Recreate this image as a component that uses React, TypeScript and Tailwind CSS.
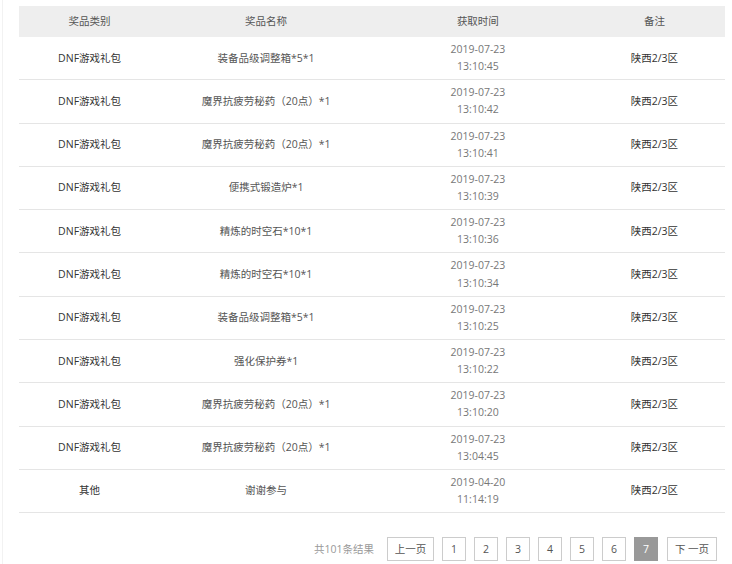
const rows = [
  { type: "DNF游戏礼包", name: "装备品级调整箱*5*1", date: "2019-07-23", time: "13:10:45" },
  { type: "DNF游戏礼包", name: "魔界抗疲劳秘药（20点）*1", date: "2019-07-23", time: "13:10:42" },
  { type: "DNF游戏礼包", name: "魔界抗疲劳秘药（20点）*1", date: "2019-07-23", time: "13:10:41" },
  { type: "DNF游戏礼包", name: "便携式锻造炉*1", date: "2019-07-23", time: "13:10:39" },
  { type: "DNF游戏礼包", name: "精炼的时空石*10*1", date: "2019-07-23", time: "13:10:36" },
  { type: "DNF游戏礼包", name: "精炼的时空石*10*1", date: "2019-07-23", time: "13:10:34" },
  { type: "DNF游戏礼包", name: "装备品级调整箱*5*1", date: "2019-07-23", time: "13:10:25" },
  { type: "DNF游戏礼包", name: "强化保护券*1", date: "2019-07-23", time: "13:10:22" },
  { type: "DNF游戏礼包", name: "魔界抗疲劳秘药（20点）*1", date: "2019-07-23", time: "13:10:20" },
  { type: "DNF游戏礼包", name: "魔界抗疲劳秘药（20点）*1", date: "2019-07-23", time: "13:04:45" },
  { type: "其他", name: "谢谢参与", date: "2019-04-20", time: "11:14:19" },
];

const font = "font-['Open_Sans','Noto_Sans_CJK_SC',sans-serif]";

export default function App() {
  return (
    <div className={`min-h-[564px] bg-white ${font} text-[10.5px] leading-[17.14px]`}>
      <div className="ml-[2px] border-l border-[#f2f2f2] pl-[16px] pr-[7px] pt-[6px] pb-[3px]">
        <table className="w-full table-fixed border-collapse text-center">
          <colgroup>
            <col className="w-[20%]" />
            <col className="w-[30%]" />
            <col className="w-[30%]" />
            <col className="w-[20%]" />
          </colgroup>
          <thead>
            <tr className="bg-[#eeeeee] text-[#555]">
              <th className="h-[31px] p-0 font-normal">奖品类别</th>
              <th className="h-[31px] p-0 font-normal">奖品名称</th>
              <th className="h-[31px] p-0 font-normal">获取时间</th>
              <th className="h-[31px] p-0 font-normal">备注</th>
            </tr>
          </thead>
          <tbody>
            {rows.map((r, i) => (
              <tr key={i} className="border-b border-[#e5e5e5]">
                <td className="py-[4px] text-[#333]">{r.type}</td>
                <td className="py-[4px] text-[#555]">{r.name}</td>
                <td className="py-[4px] text-[#777]">
                  {r.date}
                  <br />
                  {r.time}
                </td>
                <td className="py-[4px] text-[#333]">陕西2/3区</td>
              </tr>
            ))}
          </tbody>
        </table>

        {/* pagination */}
        <div className="mt-[24px] mr-[8px] flex items-center justify-end text-[#666]">
          <span className="mr-[13px] text-[#999]">共101条结果</span>
          <PageBtn className="w-[47px]">上一页</PageBtn>
          {[1, 2, 3, 4, 5, 6].map((n) => (
            <PageBtn key={n} className="ml-[8px] w-[24px]">{n}</PageBtn>
          ))}
          <span className="ml-[8px] flex h-[24px] w-[24px] items-center justify-center bg-[#999] text-white">7</span>
          <PageBtn className="ml-[9px] w-[50px]">下 一页</PageBtn>
        </div>
      </div>
    </div>
  );
}

function PageBtn({ children, className = "" }: { children: React.ReactNode; className?: string }) {
  return (
    <span className={`flex h-[24px] items-center justify-center border border-[#ccc] bg-white text-[#555] ${className}`}>
      {children}
    </span>
  );
}
